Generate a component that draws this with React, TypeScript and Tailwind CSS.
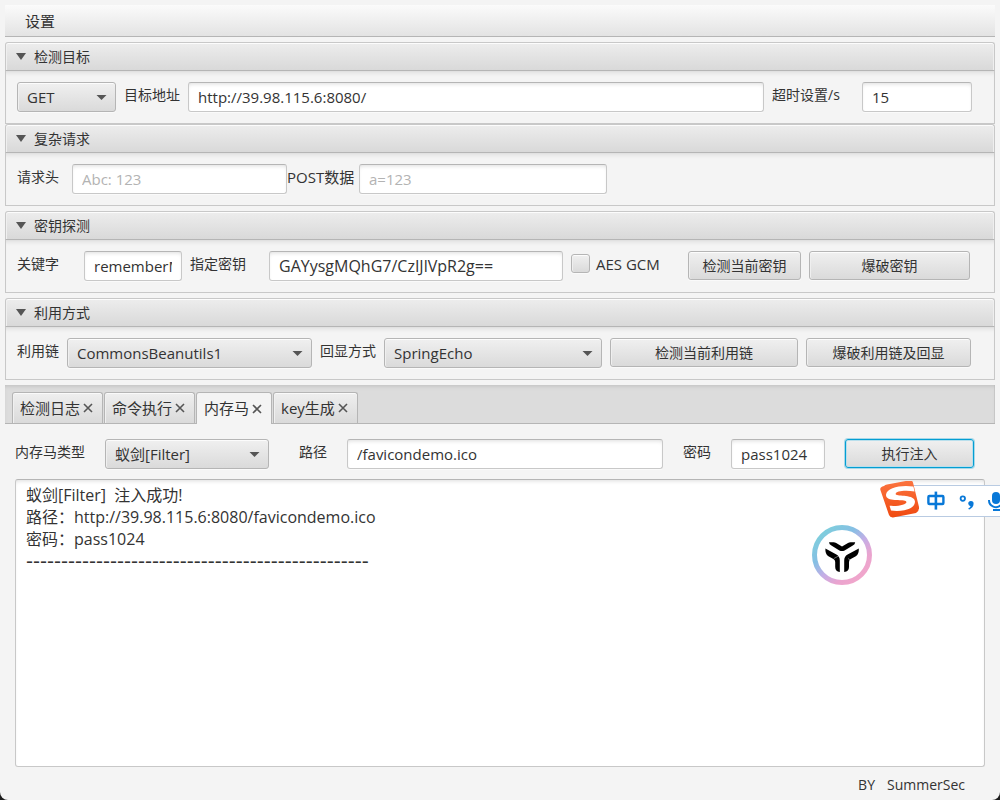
import { useState } from "react";
import type { ReactNode } from "react";

const raised =
  "rounded-[3px] border border-[#b5b5b5] bg-linear-to-b from-[#f0f0f0] to-[#dadada] shadow-[inset_0_1px_0_#fcfcfc,inset_1px_0_0_#efefef,0_1px_0_#fafafa] text-[#333333]";
const field =
  "h-[30px] min-w-0 rounded-[3px] border border-[#c8c8c8] border-t-[#b5b5b5] bg-white px-[9px] text-[#333333] shadow-[inset_0_3px_4px_-2px_#dddddd,0_1px_0_#fafafa] outline-none placeholder:text-[#b3b3b3]";
const caption = "shrink-0 whitespace-nowrap leading-[26px]";

function Select({ id, value, options, className }: { id: string; value: string; options: string[]; className: string }) {
  return (
    <div className={`relative ${className}`}>
      <select id={id} defaultValue={value} className={`h-[30px] w-full appearance-none px-[9px] text-[15px] outline-none ${raised}`}>
        {options.map((o) => (
          <option key={o}>{o}</option>
        ))}
      </select>
      <svg className="pointer-events-none absolute top-[13px] right-[9px]" width="11" height="5" viewBox="0 0 11 5" aria-hidden="true">
        <path d="M0.5 0H10.5L5.5 5Z" fill="#555" />
      </svg>
    </div>
  );
}

function Button({ children, className, focused }: { children: ReactNode; className: string; focused?: boolean }) {
  return (
    <button
      type="button"
      className={`h-[29px] shrink-0 text-sm leading-none ${
        focused
          ? "rounded-[3px] border border-[#039ed3] bg-linear-to-b from-[#f0f0f0] to-[#dadada] text-[#333333] shadow-[inset_0_0_0_1px_#b9dfec,0_0_0_1px_#a8d8e8]"
          : raised
      } ${className}`}
    >
      {children}
    </button>
  );
}

function Panel({ title, className, children }: { title: string; className: string; children: ReactNode }) {
  return (
    <section>
      <h2>
        <button
          type="button"
          aria-expanded="true"
          className="flex h-[29px] w-full items-center gap-2 rounded-t-[3px] border border-[#c8c8c8] border-b-[#b5b5b5] bg-linear-to-b from-[#ededed] to-[#d9d9d9] px-[10px] text-sm shadow-[inset_0_1px_0_#fcfcfc,inset_1px_0_0_#efefef,inset_-1px_0_0_#efefef]"
        >
          <svg width="10" height="7" viewBox="0 0 10 7" aria-hidden="true">
            <path d="M0 0H10L5 7Z" fill="#555" />
          </svg>
          {title}
        </button>
      </h2>
      <div
        className={`flex h-[53px] items-start border-x border-b border-[#c8c8c8] pt-[11px] pl-[11px] shadow-[inset_0_5px_5px_-4px_#d4d4d4] ${className}`}
      >
        {children}
      </div>
    </section>
  );
}

function BrandBadge() {
  return (
    <svg width="60" height="60" viewBox="0 0 60 60" aria-label="assistant" role="img">
      <defs>
        <linearGradient id="ring" x1="0.15" y1="0.1" x2="0.85" y2="0.9">
          <stop offset="0" stopColor="#7fcddd" />
          <stop offset="0.3" stopColor="#86bfe4" />
          <stop offset="0.55" stopColor="#c4aee6" />
          <stop offset="0.8" stopColor="#eaa4cf" />
          <stop offset="1" stopColor="#f0a6cb" />
        </linearGradient>
      </defs>
      <circle cx="30" cy="30" r="27.5" fill="#fff" stroke="url(#ring)" strokeWidth="5" />
      <g fill="#000">
        <path d="M17 17.2H21.6Q23 17.2 24.2 17.9L30 21.5L36 17.9Q37.2 17.2 38.6 17.2H43.2Q43 19.4 40.8 20.6L32.6 25.4Q30 26.8 27.4 25.4L19.4 20.6Q17.2 19.4 17 17.2Z" />
        <path d="M13.4 23.6L24.4 29.6Q27.8 31.6 27.8 35.4V47Q23.2 46.4 23.2 42V37Q23.2 35 21.4 34L16.4 31.2Q13 29.2 13.4 23.6Z" />
        <path d="M46.8 23.6L35.6 29.6Q32.2 31.6 32.2 35.4V47Q37 46.4 37 42V37Q37 35 38.8 34L43.8 31.2Q47.2 29.2 46.8 23.6Z" />
      </g>
      <path d="M21.8 33.6L28 30.2M36 33.6L41 36.4" stroke="#fff" strokeWidth="0.6" opacity="0.7" />
    </svg>
  );
}

function InputMethodBar() {
  return (
    <div className="flex h-8 w-[108px] items-center border-y border-[#b9cbe2] bg-white">
      <svg width="120" height="40" viewBox="0 0 120 40" className="-ml-3 shrink-0" aria-label="中" role="img">
        <defs>
          <linearGradient id="sogou" x1="0" y1="0" x2="0" y2="1">
            <stop offset="0" stopColor="#fb7440" />
            <stop offset="1" stopColor="#f04a10" />
          </linearGradient>
        </defs>
        <path d="M4 5Q5 4 7 3.6L29 -0.6Q32 -1 33 1.4L39 26Q39.4 30 36 32L13 36.4Q10 36.6 9 34L0.4 9Q-0.4 6 4 5Z" fill="url(#sogou)" overflow="visible" />
        <path
          d="M33.4 5.6C22 3.6 6.6 6.4 6 13.8C5.6 21 22.6 18.6 25.6 20C29 22.4 21 25.6 9.6 24.8L11 29.6C21 31 34.6 28.8 35 20.8C35.2 13 17.4 15.4 15.8 13.4C14.4 10.4 24.6 8.6 34.6 10.6Z"
          fill="#fff"
        />
        <g fill="none" stroke="#0878d8" strokeWidth="2.4">
          <rect x="48.4" y="15" width="15" height="8" rx="1" />
          <path d="M55.9 10.6V28.6" strokeWidth="2.6" />
          <circle cx="82.8" cy="17.6" r="2.2" strokeWidth="1.8" />
        </g>
        <path d="M88.2 22.6A2.7 2.7 0 1 1 93.6 22.8Q93.4 27 89 28.6L88.2 27.4Q90.2 26.6 90.6 25.2Q88.4 25 88.2 22.6Z" fill="#0878d8" />
        <rect x="112" y="11" width="8" height="12" rx="4" fill="#0878d8" />
        <path d="M109 19A7 7 0 0 0 121 24M113 29H121" fill="none" stroke="#0878d8" strokeWidth="2" />
      </svg>
    </div>
  );
}

const tabs = ["检测日志", "命令执行", "内存马", "key生成"];

export default function App() {
  const [active, setActive] = useState("内存马");
  return (
    <div className="min-h-screen bg-[#1c1c1c]">
      <div className="flex min-h-screen flex-col overflow-hidden rounded-b-lg bg-[#f4f4f4] px-[5px] pt-[5px] font-['Open_Sans','Noto_Sans_CJK_SC',sans-serif] text-[#333333]">
        <nav className="mb-[5px] flex h-8 shrink-0 items-center border-b border-[#b5b5b5] bg-linear-to-b from-[#fbfbfb] to-[#e3e3e3] px-5 pt-0.5">
          <button type="button" className="text-[15px]">
            设置
          </button>
        </nav>

        <Panel title="检测目标" className="pr-[22px]">
          <Select id="method" value="GET" options={["GET", "POST"]} className="w-[99px] shrink-0" />
          <label htmlFor="target" className={`${caption} w-[72px] pl-2 text-sm leading-7`}>
            目标地址
          </label>
          <input id="target" defaultValue="http://39.98.115.6:8080/" className={`${field} flex-1 text-[15px]`} />
          <label htmlFor="timeout" className={`${caption} w-[98px] pl-2 text-sm leading-7`}>
            超时设置/s
          </label>
          <input id="timeout" defaultValue="15" className={`${field} w-[110px] text-[15px]`} />
        </Panel>

        <Panel title="复杂请求" className="pr-[22px]">
          <label htmlFor="headers" className={`${caption} w-[55px] text-sm leading-[26px]`}>
            请求头
          </label>
          <input id="headers" placeholder="Abc: 123" className={`${field} w-[215px] text-[15px]`} />
          <label htmlFor="post" className={`${caption} w-[72px] text-[15px]`}>
            POST数据
          </label>
          <input id="post" placeholder="a=123" className={`${field} w-[248px] text-[15px]`} />
        </Panel>

        <div className="mt-[5px]">
          <Panel title="密钥探测" className="pr-6">
            <label htmlFor="keyword" className={`${caption} w-[67px] text-sm leading-[26px]`}>
              关键字
            </label>
            <div className={`${field} flex w-[98px] shrink-0 text-[15px]`}>
              <input id="keyword" defaultValue="rememberMe" className="w-full min-w-0 bg-transparent outline-none" />
            </div>
            <label htmlFor="key" className={`${caption} w-[87px] pl-2 text-sm leading-[26px]`}>
              指定密钥
            </label>
            <input id="key" defaultValue="GAYysgMQhG7/CzIJlVpR2g==" className={`${field} flex-1 text-base`} />
            <label className={`${caption} flex w-[125px] gap-[6px] pl-2 text-[15px]`}>
              <input type="checkbox" className={`mt-[3px] size-[19px] appearance-none ${raised}`} />
              AES GCM
            </label>
            <Button className="w-[113px]">检测当前密钥</Button>
            <Button className="ml-2 w-[161px]">爆破密钥</Button>
          </Panel>
        </div>

        <div className="mt-[5px]">
          <Panel title="利用方式" className="pr-[23px]">
            <label htmlFor="gadget" className={`${caption} w-[50px] text-sm leading-[26px]`}>
              利用链
            </label>
            <Select id="gadget" value="CommonsBeanutils1" options={["CommonsBeanutils1", "CommonsCollections2"]} className="flex-1" />
            <label htmlFor="echo" className={`${caption} w-[72px] pl-2 text-sm leading-[26px]`}>
              回显方式
            </label>
            <Select id="echo" value="SpringEcho" options={["SpringEcho", "TomcatEcho"]} className="w-[218px] shrink-0" />
            <Button className="ml-2 w-[188px]">检测当前利用链</Button>
            <Button className="ml-2 w-[165px]">爆破利用链及回显</Button>
          </Panel>
        </div>

        <div
          role="tablist"
          className="mt-[5px] flex h-[39px] shrink-0 items-end gap-px border-b border-[#b5b5b5] bg-[#dcdcdc] pl-[7px] shadow-[inset_0_3px_4px_-2px_#bdbdbd,inset_-1px_0_0_#c8c8c8]"
        >
          {tabs.map((t) => (
            <button
              key={t}
              type="button"
              role="tab"
              aria-selected={t === active}
              onClick={() => setActive(t)}
              className={`flex items-center gap-[3px] rounded-t-[3px] border border-b-0 border-[#b5b5b5] pr-[9px] pl-[7px] text-[15px] ${
                t === active
                  ? "-mb-px h-8 bg-[#f4f4f4]"
                  : "h-[31px] bg-linear-to-b from-[#efefef] to-[#dadada] shadow-[inset_0_1px_0_#fafafa,inset_1px_0_0_#f0f0f0]"
              }`}
            >
              {t}
              <svg width="10" height="10" viewBox="0 0 10 10" aria-hidden="true">
                <path d="M1 1L9 9M9 1L1 9" stroke="#555" strokeWidth="1.6" />
              </svg>
            </button>
          ))}
        </div>

        <main className="flex flex-1 flex-col px-[10px] pt-[15px]">
          <div className="flex items-start pr-[11px]">
            <label htmlFor="shell" className={`${caption} w-[90px] text-sm leading-[26px]`}>
              内存马类型
            </label>
            <Select id="shell" value="蚁剑[Filter]" options={["蚁剑[Filter]", "冰蝎[Filter]"]} className="w-[164px] shrink-0" />
            <label htmlFor="path" className={`${caption} w-[78px] pl-[30px] text-sm leading-[26px]`}>
              路径
            </label>
            <input id="path" defaultValue="/favicondemo.ico" className={`${field} flex-1 text-[15px]`} />
            <label htmlFor="password" className={`${caption} w-[68px] pl-5 text-sm leading-[26px]`}>
              密码
            </label>
            <input id="password" defaultValue="pass1024" className={`${field} w-[94px] text-[15px]`} />
            <Button focused className="ml-5 w-[129px]">
              执行注入
            </Button>
          </div>

          <div className="relative mt-[10px] flex flex-1">
            <div
              role="log"
              className="flex-1 rounded-[3px] border border-[#c8c8c8] border-t-[#b5b5b5] bg-white px-[10px] py-1 text-base leading-[22px] whitespace-pre-wrap shadow-[inset_0_3px_4px_-2px_#dddddd]"
            >
              <p>{"蚁剑[Filter]  注入成功!"}</p>
              <p>路径：http://39.98.115.6:8080/favicondemo.ico</p>
              <p>密码：pass1024</p>
              <p className="font-['Liberation_Sans',sans-serif] text-[21px] leading-[22px]">{"-".repeat(49)}</p>
            </div>
            <div className="absolute top-[46px] right-[113px]">
              <BrandBadge />
            </div>
            <div className="absolute top-[6px] -right-[15px]">
              <InputMethodBar />
            </div>
          </div>
        </main>

        <footer className="flex h-[33px] shrink-0 items-center justify-end gap-3 pt-0.5 pr-[30px] text-sm">
          <span>BY</span>
          <span>SummerSec</span>
        </footer>
      </div>
    </div>
  );
}
